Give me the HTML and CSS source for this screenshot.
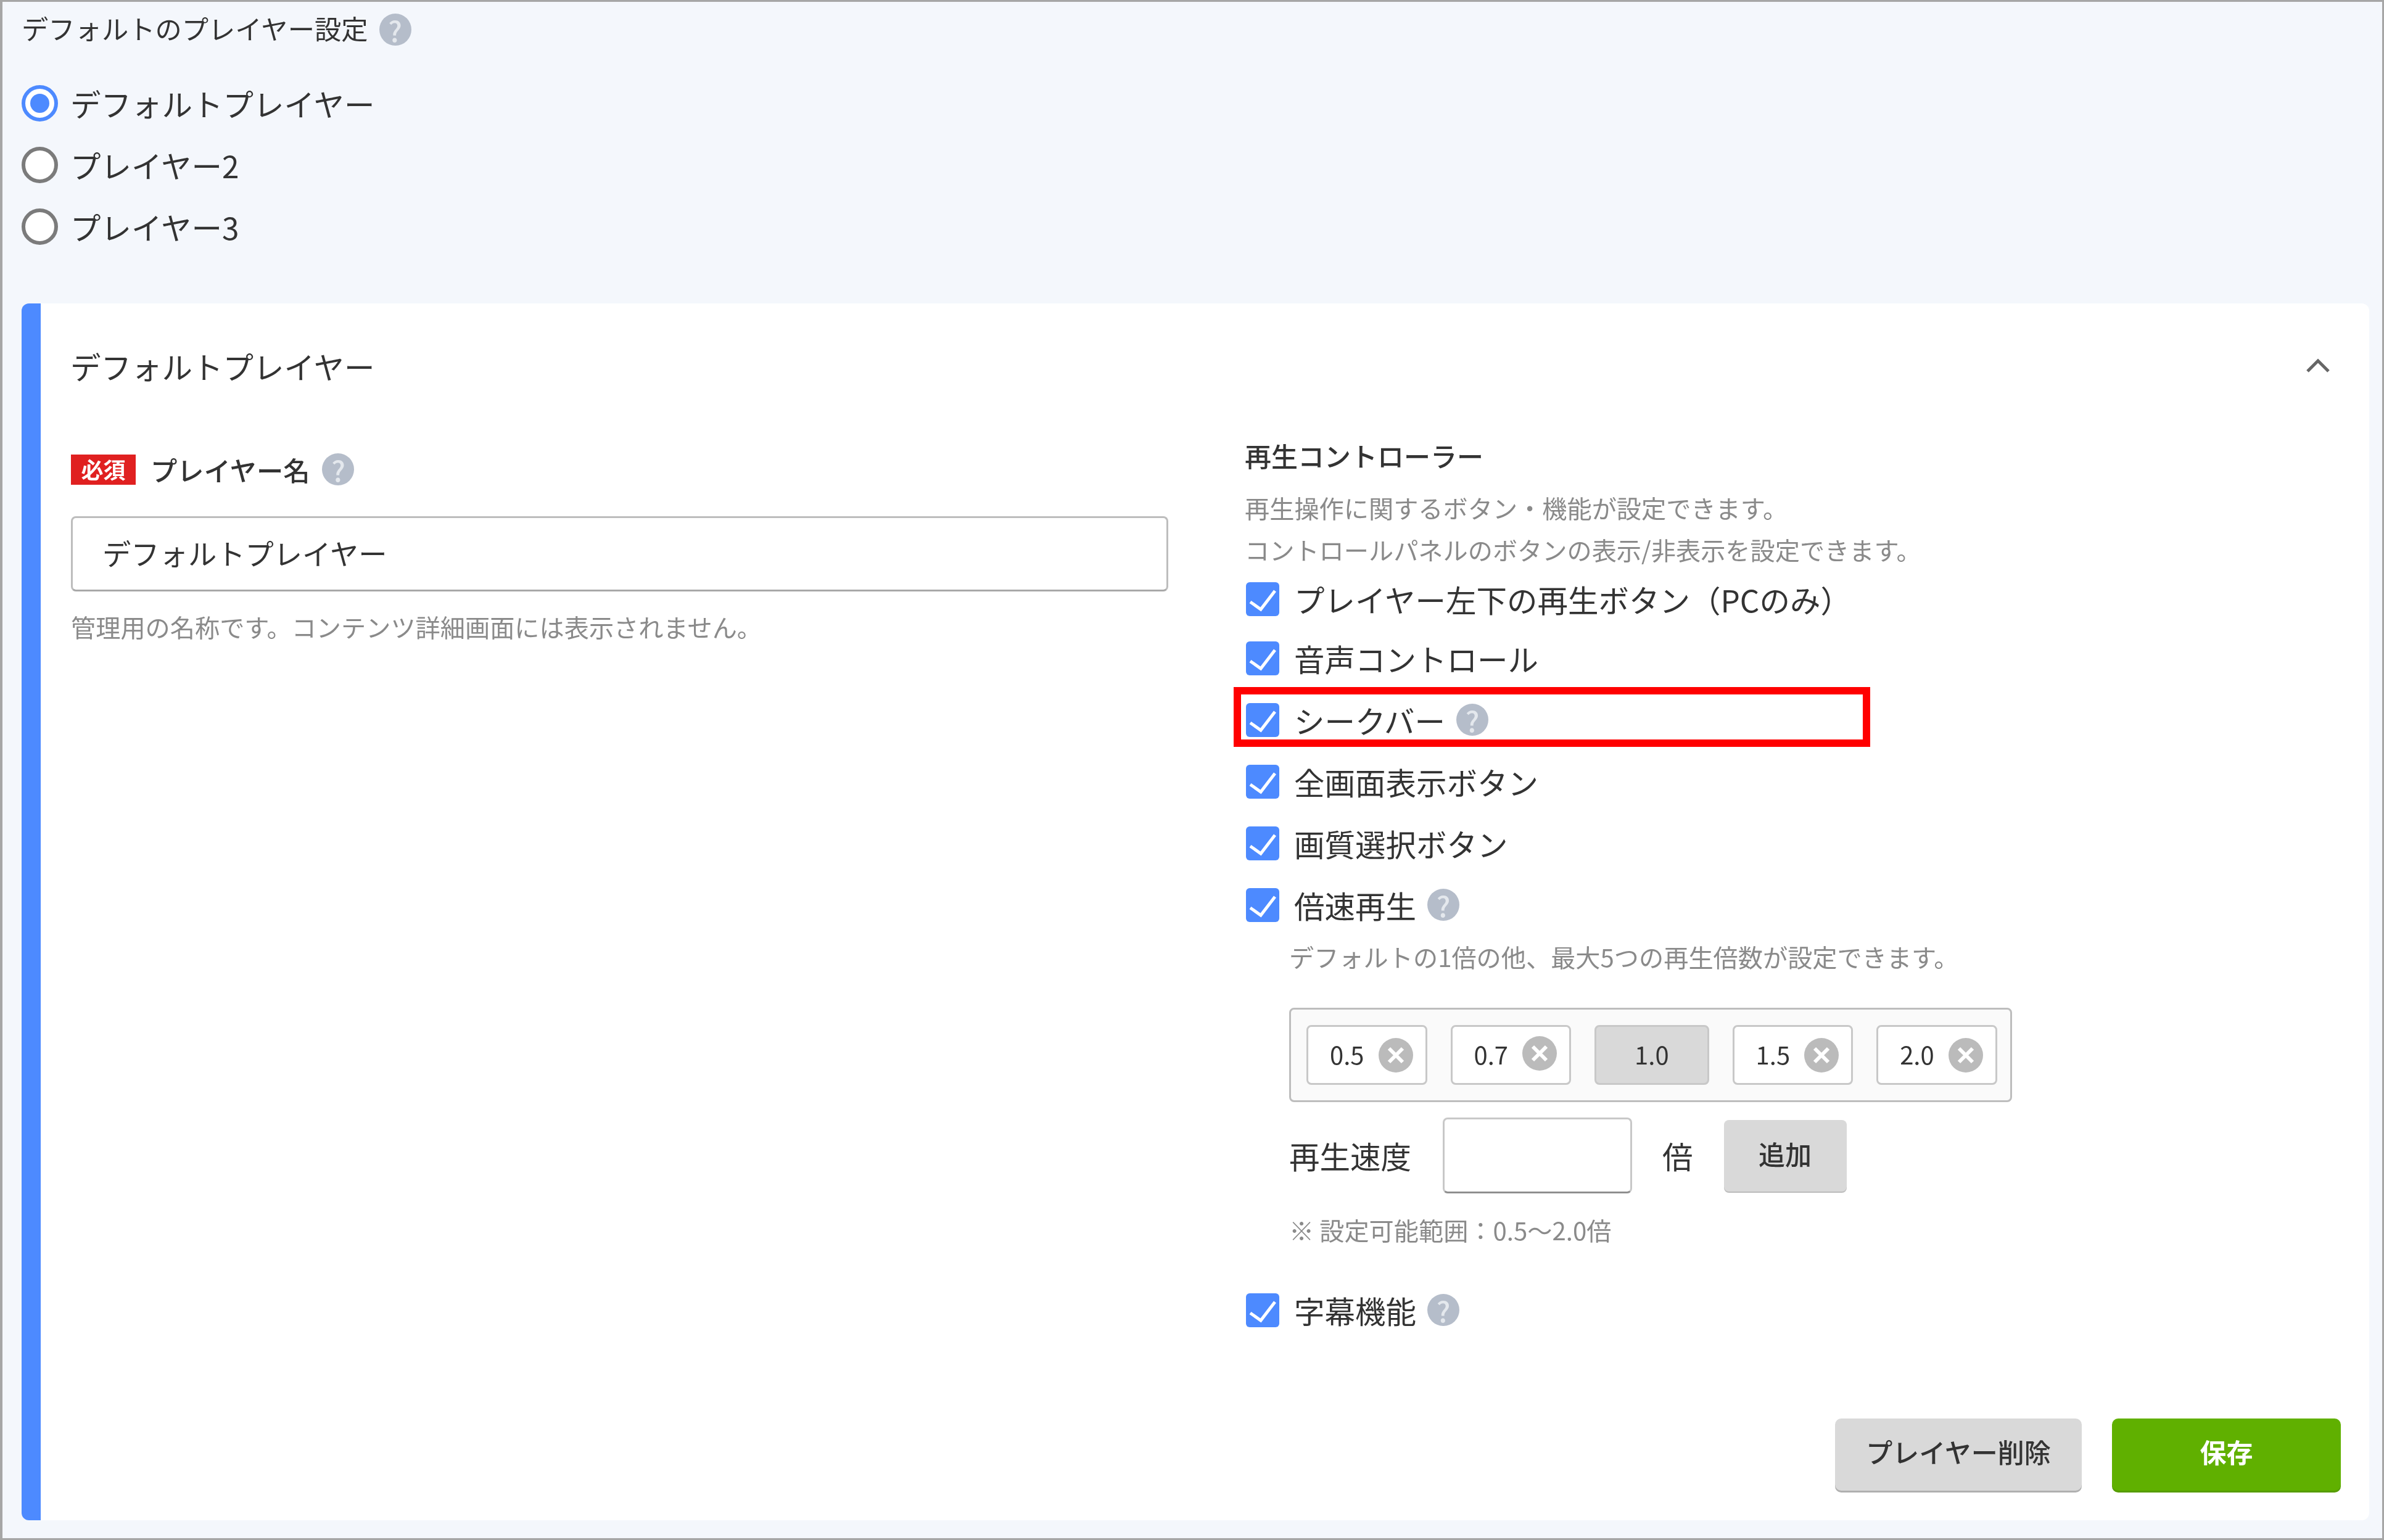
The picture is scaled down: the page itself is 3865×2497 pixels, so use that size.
FILE: index.html
```html
<!DOCTYPE html>
<html lang="ja">
<head>
<meta charset="utf-8">
<title>デフォルトのプレイヤー設定</title>
<link rel="stylesheet" href="styles.css">
</head>
<body>
<main class="frame">
  <div class="title-row"><span class="title">デフォルトのプレイヤー設定</span><span class="help help-title">?</span></div>
  <div class="radios">
    <div class="radio-row"><span class="radio radio-on"></span><span class="label">デフォルトプレイヤー</span></div>
    <div class="radio-row"><span class="radio"></span><span class="label">プレイヤー2</span></div>
    <div class="radio-row"><span class="radio"></span><span class="label">プレイヤー3</span></div>
  </div>
  <section class="card">
    <header class="card-head">
      <span class="label">デフォルトプレイヤー</span>
      <svg class="chevron" viewBox="0 0 38 24"><path d="M2 21 L19 4 L36 21"/></svg>
    </header>
    <div class="card-body">
      <div class="col-left">
        <div class="name-row"><span class="badge">必須</span><span class="name-label">プレイヤー名</span><span class="help help-name">?</span></div>
        <div class="text-input">デフォルトプレイヤー</div>
        <p class="hint hint-name">管理用の名称です。コンテンツ詳細画面には表示されません。</p>
      </div>
      <div class="col-right">
        <h2 class="section-title">再生コントローラー</h2>
        <div class="section-desc">
          <p class="desc-line">再生操作に関するボタン・機能が設定できます。</p>
          <p class="desc-line">コントロールパネルのボタンの表示/非表示を設定できます。</p>
        </div>
        <div class="check-row check-first"><span class="check"><svg viewBox="0 0 54 55"><path d="M7 32 L24 44 L47 14"/></svg></span><span class="label">プレイヤー左下の再生ボタン（PCのみ）</span></div>
        <div class="check-row"><span class="check"><svg viewBox="0 0 54 55"><path d="M7 32 L24 44 L47 14"/></svg></span><span class="label">音声コントロール</span></div>
        <div class="check-row"><span class="check"><svg viewBox="0 0 54 55"><path d="M7 32 L24 44 L47 14"/></svg></span><span class="label">シークバー</span><span class="help help-row">?</span><span class="highlight"></span></div>
        <div class="check-row"><span class="check"><svg viewBox="0 0 54 55"><path d="M7 32 L24 44 L47 14"/></svg></span><span class="label">全画面表示ボタン</span></div>
        <div class="check-row"><span class="check"><svg viewBox="0 0 54 55"><path d="M7 32 L24 44 L47 14"/></svg></span><span class="label">画質選択ボタン</span></div>
        <div class="check-row"><span class="check"><svg viewBox="0 0 54 55"><path d="M7 32 L24 44 L47 14"/></svg></span><span class="label">倍速再生</span><span class="help help-row">?</span></div>
        <div class="speed">
          <p class="hint hint-speed">デフォルトの1倍の他、最大5つの再生倍数が設定できます。</p>
          <div class="tags">
            <span class="tag"><span class="tag-text">0.5</span><svg class="close" viewBox="0 0 56 56"><circle cx="28" cy="28" r="28"/><path d="M17 17 L39 39 M39 17 L17 39"/></svg></span>
            <span class="tag"><span class="tag-text">0.7</span><svg class="close close-up" viewBox="0 0 56 56"><circle cx="28" cy="28" r="28"/><path d="M17 17 L39 39 M39 17 L17 39"/></svg></span>
            <span class="tag tag-fixed"><span class="tag-text">1.0</span></span>
            <span class="tag"><span class="tag-text">1.5</span><svg class="close" viewBox="0 0 56 56"><circle cx="28" cy="28" r="28"/><path d="M17 17 L39 39 M39 17 L17 39"/></svg></span>
            <span class="tag"><span class="tag-text">2.0</span><svg class="close" viewBox="0 0 56 56"><circle cx="28" cy="28" r="28"/><path d="M17 17 L39 39 M39 17 L17 39"/></svg></span>
          </div>
          <div class="speed-row">
            <span class="label">再生速度</span>
            <span class="speed-input"></span>
            <span class="label">倍</span>
            <span class="add-btn">追加</span>
          </div>
          <p class="hint hint-note">※ 設定可能範囲：0.5～2.0倍</p>
        </div>
        <div class="check-row check-last"><span class="check"><svg viewBox="0 0 54 55"><path d="M7 32 L24 44 L47 14"/></svg></span><span class="label">字幕機能</span><span class="help help-row">?</span></div>
      </div>
    </div>
    <footer class="card-foot">
      <span class="btn btn-delete">プレイヤー削除</span>
      <span class="btn btn-save">保存</span>
    </footer>
  </section>
</main>
</body>
</html>
```

FILE: styles.css
```css
* { box-sizing: border-box; }
html, body { margin: 0; padding: 0; }
body { width: 3865px; height: 2497px; overflow: hidden; background: #fff; font-family: "Noto Sans CJK JP", "Noto Sans", sans-serif; color: #333; }
p, h2 { margin: 0; font-weight: 400; }

.frame { width: 3865px; height: 2497px; display: flex; flex-direction: column; padding: 19px 21px 29px 31px; border: 3px solid #a6a6a6; border-left-width: 4px; background: #f4f7fc; filter: blur(0.7px); }

.title-row { display: flex; align-items: center; height: 51px; flex: none; }
.title { margin-bottom: 4px; font-size: 43.3px; line-height: 51px; }
.help { display: flex; align-items: center; justify-content: center; flex: none; width: 52px; height: 52px; border-radius: 50%; background: #b5bdca; color: #e4e8ed; font-size: 46px; font-weight: 500; line-height: 1; }
.help-title { margin-left: 18px; }
.help-name { margin-left: 20px; }
.help-row { margin-left: 18px; }

.label { font-size: 49.5px; line-height: 60px; white-space: nowrap; }

.radios { margin-top: 44px; flex: none; }
.radio-row { display: flex; align-items: center; height: 100px; gap: 20px; }
.radio-row .label { padding-top: 2px; }
.radio { flex: none; width: 59px; height: 59px; border-radius: 50%; border: 6px solid #7b7b7b; background: #fff; display: flex; align-items: center; justify-content: center; }
.radio-on { border-color: #4d8aff; }
.radio-on::after { content: ""; width: 31px; height: 31px; border-radius: 50%; background: #4d8aff; }

.card { flex: 1; margin-top: 75px; display: flex; flex-direction: column; background: #fff; border-left: 31px solid #4d8aff; border-radius: 12px; }
.card-head { display: flex; align-items: center; justify-content: space-between; height: 212px; padding: 0 64px 8px 48px; flex: none; }
.chevron { width: 38px; height: 24px; margin-top: -2px; }
.chevron path { fill: none; stroke: #666; stroke-width: 5; }

.card-body { flex: 1; display: grid; grid-template-columns: 1779px 1fr; column-gap: 124px; padding-left: 49px; }
.col-left { padding-top: 30px; }
.name-row { display: flex; align-items: center; height: 54px; }
.badge { flex: none; width: 105px; height: 49px; background: #e02020; color: #fff; font-size: 36px; font-weight: 700; line-height: 47px; text-align: center; }
.name-label { margin-left: 24px; font-size: 43.3px; font-weight: 500; line-height: 54px; }
.text-input { height: 122px; margin-top: 49px; padding-left: 48px; border: 3px solid #bdbdbd; border-bottom-color: #a8a8a8; border-radius: 8px; background: #fff; font-size: 46.3px; line-height: 112px; }
.hint { font-size: 40.2px; line-height: 60px; color: #8a8a8a; white-space: nowrap; }
.hint-name { margin-top: 27px; }

.col-right { padding-top: 4px; }
.section-title { font-size: 43px; font-weight: 500; line-height: 60px; }
.section-desc { margin-top: 21px; }
.desc-line { font-size: 40.2px; line-height: 68px; color: #8a8a8a; white-space: nowrap; }

.check-row { position: relative; display: flex; align-items: center; height: 100px; }
.check-row .label { padding-top: 2px; }
.check-first { height: 92px; }
.check-last { margin-top: 50px; }
.check { flex: none; width: 54px; height: 55px; margin: 0 24px 0 2px; border-radius: 6px; background: #4d8aff; display: flex; }
.check svg { width: 54px; height: 55px; }
.check path { fill: none; stroke: #fff; stroke-width: 5; }
.highlight { position: absolute; left: -18px; top: -3px; width: 1032px; height: 97px; border: 12px solid #f00; }

.speed { margin-top: 4px; padding-left: 72px; }
.tags { display: flex; gap: 38px; width: 1172px; height: 153px; margin-top: 53px; padding: 25px; border: 3px solid #bdbdbd; border-radius: 8px; background: #fafafa; }
.tag { display: flex; align-items: center; gap: 23px; height: 97px; padding: 0 20px 0 35px; border: 3px solid #c8c8c8; border-radius: 8px; background: #fff; font-size: 40px; }
.tag-text { margin-top: -4px; }
.tag-fixed { padding: 0 62px; background: #d9d9d9; }
.close { flex: none; width: 56px; height: 56px; }
.close circle { fill: #bbb; }
.close path { fill: none; stroke: #fff; stroke-width: 6; }
.close-up { margin-top: -6px; }

.speed-row { display: flex; align-items: center; margin-top: 25px; height: 123px; }
.speed-input { width: 307px; height: 123px; margin: 0 49px 0 51px; border: 3px solid #c8c8c8; border-bottom-color: #8f8f8f; border-radius: 8px; background: #fff; }
.add-btn { width: 199px; height: 116px; margin-left: 50px; border-radius: 8px; background: #d9d9d9; box-shadow: 0 2px 0 #bbb; font-size: 43px; font-weight: 500; line-height: 108px; text-align: center; }
.hint-note { margin-top: 29px; }

.card-foot { flex: none; display: flex; justify-content: flex-end; gap: 49px; padding: 0 46px 48px 0; }
.btn { display: block; height: 117px; border-radius: 10px; font-size: 43px; font-weight: 500; line-height: 106px; text-align: center; }
.btn-delete { width: 400px; background: #d9d9d9; box-shadow: 0 3px 0 #b0b0b0; }
.btn-save { width: 371px; background: #60b000; color: #fff; font-weight: 700; box-shadow: 0 3px 0 #559c00; }
```
